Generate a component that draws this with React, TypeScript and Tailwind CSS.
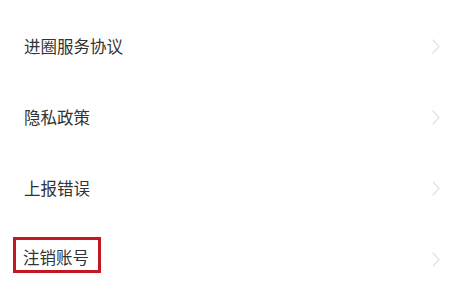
const items = [
  { label: "进圈服务协议", highlight: false },
  { label: "隐私政策", highlight: false },
  { label: "上报错误", highlight: false },
  { label: "注销账号", highlight: true },
];

function Chevron() {
  return (
    <svg width="8" height="15" viewBox="0 0 8 15" fill="none" className="shrink-0">
      <path d="M1 1l6 6.5L1 14" stroke="#e3e3e3" strokeWidth="1.3" strokeLinecap="round" strokeLinejoin="round" />
    </svg>
  );
}

export default function App() {
  return (
    <div
      className="w-[458px] h-[296px] bg-white pt-[11px] overflow-hidden"
      style={{ fontFamily: '"Noto Sans CJK SC", "Noto Sans", sans-serif' }}
    >
      {items.map((item) => (
        <div key={item.label} className="h-[71px] flex items-center justify-between pr-[18px]">
          {item.highlight ? (
            <div className="ml-[13px] mb-[9px] h-[36px] flex items-center border-[3px] border-[#c4171f] pl-[7px] pr-[9px] pt-[5px]">
              <span className="text-[16.5px] text-[#333333] leading-none">{item.label}</span>
            </div>
          ) : (
            <span className="ml-[24px] text-[16.5px] text-[#333333] leading-none">{item.label}</span>
          )}
          <Chevron />
        </div>
      ))}
    </div>
  );
}
